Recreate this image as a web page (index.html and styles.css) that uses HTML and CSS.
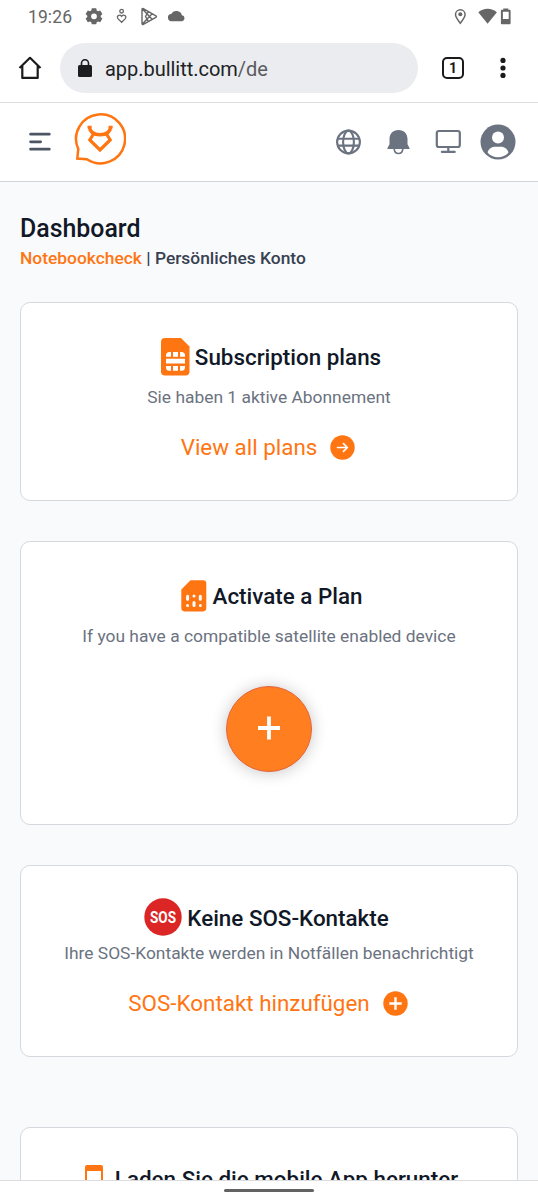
FILE: index.html
```html
<!DOCTYPE html>
<html lang="de">
<head>
<meta charset="utf-8">
<title>Dashboard</title>
<link rel="stylesheet" href="styles.css">
</head>
<body>
<div class="screen">
  <div class="status">
    <span class="clock">19:26</span>
    <svg class="status-left" width="104" height="20" viewBox="0 0 104 20" fill="none" stroke="#666" stroke-width="1.3">
      <path fill="#666" stroke="none" fill-rule="evenodd" d="M6.800 1.200h4.400l.5 2.200 1.300.8 2.200-.7 2.200 3.600-1.700 1.600v1.300l1.700 1.500-2.200 3.700-2.200-.8-1.300.8-.5 2H6.800l-.5-2-1.300-.8-2.200.8-2.200-3.700 1.700-1.500V8.700L.6 7.100l2.200-3.600L5 4.200l1.300-.8zM9 6.400a2.900 2.900 0 1 0 0 5.800a2.900 2.900 0 0 0 0-5.800z"/>
      <circle cx="36.600" cy="4.200" r="1.800"/>
      <path d="M36.600 15.300l-3.500-3.400c-2.300-2.900 1.500-5 3.500-2.500c2-2.500 5.800-.4 3.500 2.500z"/>
      <path stroke-linejoin="round" stroke-width="1.400" d="M58.300 1.700c-.8-.4-1.300 0-1.300.8v14c0 .8.500 1.200 1.300.8l12.600-7c.8-.4.8-1.100 0-1.500zM57.400 2l9.700 10.300M57.400 17l9.700-10.300M63.200 4.900l-2.700 4.600l2.700 4.600"/>
      <path fill="#666" stroke="none" d="M86.800 14.200a3.600 3.600 0 0 1-.5-7.200a5.700 5.700 0 0 1 10.600 1.300a3 3 0 0 1 .3 5.900z"/>
    </svg>
    <svg class="status-right" width="60" height="20" viewBox="0 0 60 20" fill="none">
      <path stroke="#666" stroke-width="1.500" d="M6.300 16.200c-2.700-3.300-4.800-6-4.800-8.600a4.800 4.800 0 0 1 9.600 0c0 2.600-2.100 5.300-4.800 8.600z"/>
      <circle cx="6.300" cy="7.200" r="2" fill="#666"/>
      <path fill="#666" d="M24.300 5.300c5-4.800 13.600-4.800 18.600 0L33.600 16.800z"/>
      <path fill="#666" fill-rule="evenodd" d="M49.300 2.700V1.500h5v1.200h1.300c.6 0 1 .4 1 1v12.600c0 .6-.4 1-1 1H47.900c-.6 0-1-.4-1-1V3.700c0-.6.4-1 1-1zM48.900 4.700v7.300h5.800V4.700z"/>
    </svg>
  </div>

  <div class="browser">
    <svg class="home" width="24" height="24" viewBox="0 0 24 24" fill="none" stroke="#1b1b1b" stroke-width="2.200"><path stroke-linejoin="round" d="M1.500 12L12 1.800 22.500 12M4.300 10v11.900h15.400V10"/></svg>
    <div class="address">
      <svg width="14" height="18" viewBox="0 0 14 18"><rect y="6" width="14" height="12" rx="1.500" fill="#1d1d1f"/><path d="M3.500 7V4.200a3.500 3.500 0 0 1 7 0V7" fill="none" stroke="#1d1d1f" stroke-width="1.600"/></svg>
      <span class="url">app.bullitt.com<span class="path">/de</span></span>
    </div>
    <span class="tabs">1</span>
    <svg class="more" width="6" height="22" viewBox="0 0 6 22" fill="#1b1b1b"><circle cx="3" cy="3.400" r="2.600"/><circle cx="3" cy="11" r="2.600"/><circle cx="3" cy="18.400" r="2.600"/></svg>
  </div>

  <header class="nav">
    <svg class="menu" width="22" height="20" viewBox="0 0 22 20" stroke="#4b5563" stroke-width="2.800" stroke-linecap="round"><path d="M1.600 2.200h18.700M1.600 9.800h10M1.600 17.200h18.700"/></svg>
    <svg class="logo" width="52" height="54" viewBox="0 0 52 54" fill="none" stroke="#ff7512">
      <path stroke-width="2.500" d="M4.300 38A24.500 24.500 0 1 1 13 48.200L3.300 47.500z"/>
      <path stroke-width="3.400" d="M15.300 15.500c.5 5.500 4.500 8.200 10.700 8.200s10.300-2.700 10.800-8.200"/>
      <path stroke-width="3.200" d="M19.500 23l-3.700 5.900L26 39l10.200-10.100-3.700-5.900"/>
      <path stroke-width="2.800" d="M13.600 16.200h4M34.600 16.200h4"/>
    </svg>
    <svg class="globe" width="26" height="26" viewBox="0 0 26 26" fill="none" stroke="#6b7280" stroke-width="2.100"><circle cx="13.500" cy="13" r="11.400"/><ellipse cx="13.500" cy="13" rx="5.400" ry="11.400"/><path d="M3 9.700h21M3 16.600h21"/></svg>
    <svg class="bell" width="24" height="26" viewBox="0 0 24 26"><path fill="#6b7280" d="M12.500 1c5.700 0 9 3.900 9 9v5.200l2 3.800c.3.700.1 1-.6 1H2.100c-.7 0-.9-.3-.6-1l2-3.800V10c0-5.100 3.300-9 9-9z"/><path fill="none" stroke="#6b7280" stroke-width="1.700" d="M8.200 20c.4 6 8.200 6 8.600 0"/></svg>
    <svg class="monitor" width="26" height="26" viewBox="0 0 26 26" fill="none" stroke="#6b7280" stroke-width="2.200"><rect x="1.800" y="2" width="23" height="16" rx="2"/><path stroke-linecap="round" d="M13.300 18v4.500M6.900 22.900h12.800"/></svg>
    <svg class="avatar" width="36" height="36" viewBox="0 0 36 36"><circle cx="18" cy="18" r="17.500" fill="#6b7280"/><circle cx="18" cy="13.500" r="6" fill="#fff"/><path fill="#fff" d="M7.700 28.700c0-3.200 3.800-5.900 7.300-5.900h6c3.500 0 7.300 2.700 7.300 5.900C23.500 34.600 12.500 34.600 7.700 28.700z"/></svg>
  </header>

  <main class="content">
    <h1>Dashboard</h1>
    <p class="account"><span class="brand">Notebookcheck</span> | Persönliches Konto</p>

    <section class="card plans">
      <div class="heading">
        <svg width="29" height="38" viewBox="0 0 29 38"><path fill="#ff7512" d="M4 0h16l8.500 8.500V33.500a4 4 0 0 1-4 4H4a4 4 0 0 1-4-4V4a4 4 0 0 1 4-4z"/><path fill="#fff" d="M8.500 14H10v4.700H5v-1.200A3.500 3.500 0 0 1 8.500 14zM12 14h5v4.700h-5zM19 14h1.500a3.500 3.500 0 0 1 3.500 3.500v1.200h-5zM5 20.800h19v4.700H5zM5 28h5v4.700H8.500A3.500 3.500 0 0 1 5 29.200zM12 28h5v4.700h-5zM19 28h5v1.200a3.500 3.500 0 0 1-3.500 3.500H19z"/></svg>
        <h2>Subscription plans</h2>
      </div>
      <p class="note">Sie haben 1 aktive Abonnement</p>
      <a class="link"><span>View all plans</span>
        <svg width="25" height="25" viewBox="0 0 25 25"><circle cx="12.500" cy="12.500" r="12.200" fill="#ff7512"/><path d="M7.500 12.500h9.500M13.500 8.700l3.900 3.800-3.900 3.800" fill="none" stroke="#fff" stroke-width="1.700" stroke-linecap="round" stroke-linejoin="round"/></svg>
      </a>
    </section>

    <section class="card activate">
      <div class="heading">
        <svg width="26" height="32" viewBox="0 0 26 32"><path fill="#ff7512" d="M9.500.3H22a3.300 3.300 0 0 1 3.300 3.300v24.500a3.300 3.300 0 0 1-3.300 3.300H3.600A3.300 3.300 0 0 1 .3 28.100V9.500z"/><g stroke="#fff" stroke-width="3" stroke-linecap="round"><path d="M6.600 16.200v3M19.300 16.200v3M13 22.500v3M13 15.900v.01M6.600 25.600v.01M19.300 25.600v.01"/></g></svg>
        <h2>Activate a Plan</h2>
      </div>
      <p class="note">If you have a compatible satellite enabled device</p>
      <button class="add"><svg width="24" height="24" viewBox="0 0 24 24"><path d="M12 .5v23M1 12h22" stroke="#fff" stroke-width="3.800"/></svg></button>
    </section>

    <section class="card sos">
      <div class="heading">
        <svg class="badge" width="38" height="38" viewBox="0 0 38 38"><circle cx="19" cy="19" r="18.700" fill="#dc2626"/><text x="6" y="24.500" textLength="26" lengthAdjust="spacingAndGlyphs">SOS</text></svg>
        <h2>Keine SOS-Kontakte</h2>
      </div>
      <p class="note">Ihre SOS-Kontakte werden in Notfällen benachrichtigt</p>
      <a class="link"><span>SOS-Kontakt hinzufügen</span>
        <svg width="25" height="25" viewBox="0 0 25 25"><circle cx="12.500" cy="12.500" r="12.200" fill="#ff7512"/><path d="M12.500 6.300v12.400M6.300 12.500h12.400" stroke="#fff" stroke-width="2.400"/></svg>
      </a>
    </section>

    <section class="card app">
      <div class="heading">
        <svg width="18" height="30" viewBox="0 0 18 30"><path fill="#ff7512" fill-rule="evenodd" d="M2 0h14a2 2 0 0 1 2 2v26a2 2 0 0 1-2 2H2a2 2 0 0 1-2-2V2a2 2 0 0 1 2-2zM2 6v18h14V6z"/></svg>
        <h2>Laden Sie die mobile App herunter</h2>
      </div>
    </section>
  </main>

  <footer class="gesture"><span class="handle"></span></footer>
</div>
</body>
</html>
```
FILE: styles.css
```css
* { box-sizing: border-box; }
body, h1, h2, p { margin: 0; }
body { font-family: Roboto, "Noto Sans", sans-serif; background: #fff; color: #111827; }
svg { display: block; flex: none; }
.screen { display: flex; flex-direction: column; width: 538px; height: 1200px; overflow: hidden; background: #fff; }

.status { display: flex; align-items: center; flex: none; height: 34px; padding: 0 24px 0 28px; color: #666; }
.clock { width: 57px; font-size: 17.500px; letter-spacing: .1px; }
.status-right { margin-left: auto; }

.browser { display: flex; align-items: center; flex: none; height: 69px; padding: 0 32px 0 18px; border-bottom: 1px solid #dedee1; }
.address { display: flex; align-items: center; gap: 13px; width: 358px; height: 50px; margin-left: 18px; padding-left: 18px; border-radius: 25px; background: #ebecf0; }
.url { padding-top: 2px; font-size: 20px; letter-spacing: -.03px; color: #202124; }
.path { color: #5a5b5f; }
.tabs { width: 22px; height: 22px; margin-left: 24px; border: 2px solid #1b1b1b; border-radius: 5px; font-size: 14px; font-weight: 700; line-height: 19px; text-align: center; color: #1b1b1b; }
.more { margin-left: auto; }

.nav { display: flex; align-items: center; flex: none; height: 79px; padding: 0 22px 0 29px; border-bottom: 1px solid #d1d5db; }
.logo { margin: -8px 0 0 23px; }
.globe { margin-left: auto; }
.bell { margin-left: 25px; }
.monitor { margin-left: 25px; }
.avatar { margin-left: 19px; }
.menu, .globe, .bell, .monitor, .avatar { margin-top: -1px; }

.content { flex: 1; min-height: 0; overflow: hidden; padding: 31px 20px 0; background: #f9fafc; }
h1 { font-size: 24.900px; font-weight: 500; line-height: 31px; }
.account { margin-top: 2px; font-size: 17.400px; font-weight: 500; line-height: 24px; color: #374151; }
.brand { color: #ff7512; }

.card { display: flex; flex-direction: column; align-items: center; border: 1px solid #d5d8de; border-radius: 10px; background: #fff; }
.heading { display: flex; align-items: center; justify-content: center; gap: 5px; height: 38px; }
h2 { font-size: 22.400px; font-weight: 500; line-height: 30px; white-space: nowrap; }
.note { margin-top: 9px; font-size: 17.400px; line-height: 24px; color: #6b7280; white-space: nowrap; }
.link { display: flex; align-items: center; gap: 13px; height: 32px; margin-top: 22px; padding-right: 2px; font-size: 22.400px; color: #ff7512; white-space: nowrap; }

.plans { height: 199px; margin-top: 32px; padding-top: 35px; }
.plans .heading { padding-left: 4px; }
.activate { height: 284px; margin-top: 40px; padding-top: 35px; }
.activate .heading { gap: 6px; padding-left: 5px; }
.add { display: flex; align-items: center; justify-content: center; width: 86px; height: 86px; margin-top: 38px; padding: 0 0 2px; border: 1px solid #e5633a; border-radius: 50%; background: #ff7f20; box-shadow: 0 1px 16px rgba(0, 0, 0, .22); }
.sos { height: 192px; margin-top: 40px; padding-top: 32px; }
.sos .heading { padding-right: 5px; }
.sos h2 { padding-top: 1px; }
.sos .note { margin-top: 5px; }
.badge text { fill: #fff; font-size: 16px; font-weight: 700; }
.app { height: 200px; margin-top: 70px; padding-top: 32px; }
.app .heading { gap: 12px; padding-left: 5px; }
.app .heading svg { margin-top: 2px; }

.gesture { display: flex; justify-content: center; flex: none; height: 20px; padding-top: 8px; border-top: 1px solid #dcdcde; background: #fff; }
.handle { width: 90px; height: 3px; border-radius: 2px; background: #626262; }
```
